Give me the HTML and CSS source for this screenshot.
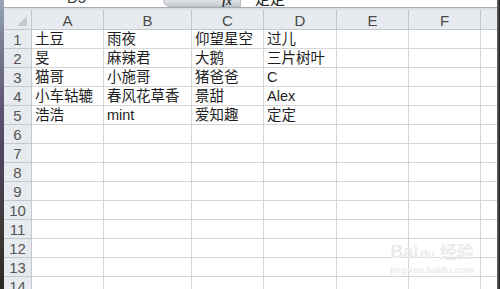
FILE: index.html
```html
<!DOCTYPE html>
<html lang="zh">
<head>
<meta charset="utf-8">
<title>Sheet</title>
<link rel="stylesheet" href="styles.css">
</head>
<body>
<div class="screen">
  <div class="edge-left"></div>
  <div class="window">
    <div class="formula-bar">
      <div class="name-box"><span class="name">D5</span></div>
      <div class="fx-area"><span class="fx">fx</span></div>
      <div class="formula">定定</div>
    </div>
    <div class="gap"></div>
    <div class="sheet">
      <div class="corner"><span class="tri"></span></div>
      <div class="ch">A</div><div class="ch">B</div><div class="ch">C</div><div class="ch">D</div><div class="ch">E</div><div class="ch">F</div><div class="ch last"></div>

      <div class="rh">1</div><div class="c">土豆</div><div class="c">雨夜</div><div class="c">仰望星空</div><div class="c">过儿</div><div class="c"></div><div class="c"></div><div class="c last"></div>
      <div class="rh">2</div><div class="c">旻</div><div class="c">麻辣君</div><div class="c">大鹅</div><div class="c">三片树叶</div><div class="c"></div><div class="c"></div><div class="c last"></div>
      <div class="rh">3</div><div class="c">猫哥</div><div class="c">小施哥</div><div class="c">猪爸爸</div><div class="c">C</div><div class="c"></div><div class="c"></div><div class="c last"></div>
      <div class="rh">4</div><div class="c">小车轱辘</div><div class="c">春风花草香</div><div class="c">景甜</div><div class="c">Alex</div><div class="c"></div><div class="c"></div><div class="c last"></div>
      <div class="rh">5</div><div class="c">浩浩</div><div class="c">mint</div><div class="c">爱知趣</div><div class="c">定定</div><div class="c"></div><div class="c"></div><div class="c last"></div>
      <div class="rh">6</div><div class="c"></div><div class="c"></div><div class="c"></div><div class="c"></div><div class="c"></div><div class="c"></div><div class="c last"></div>
      <div class="rh">7</div><div class="c"></div><div class="c"></div><div class="c"></div><div class="c"></div><div class="c"></div><div class="c"></div><div class="c last"></div>
      <div class="rh">8</div><div class="c"></div><div class="c"></div><div class="c"></div><div class="c"></div><div class="c"></div><div class="c"></div><div class="c last"></div>
      <div class="rh">9</div><div class="c"></div><div class="c"></div><div class="c"></div><div class="c"></div><div class="c"></div><div class="c"></div><div class="c last"></div>
      <div class="rh">10</div><div class="c"></div><div class="c"></div><div class="c"></div><div class="c"></div><div class="c"></div><div class="c"></div><div class="c last"></div>
      <div class="rh">11</div><div class="c"></div><div class="c"></div><div class="c"></div><div class="c"></div><div class="c"></div><div class="c"></div><div class="c last"></div>
      <div class="rh">12</div><div class="c"></div><div class="c"></div><div class="c"></div><div class="c"></div><div class="c"></div><div class="c"></div><div class="c last"></div>
      <div class="rh">13</div><div class="c"></div><div class="c"></div><div class="c"></div><div class="c"></div><div class="c"></div><div class="c"></div><div class="c last"></div>
      <div class="rh">14</div><div class="c"></div><div class="c"></div><div class="c"></div><div class="c"></div><div class="c"></div><div class="c"></div><div class="c last"></div>
    </div>
    <div class="watermark">
      <div class="wm-top"><span class="wm-bai">Bai</span><span class="wm-du">du</span><span class="wm-jy">经验</span></div>
      <div class="wm-url">jingyan.baidu.com</div>
    </div>
  </div>
  <div class="edge-right"></div>
</div>
</body>
</html>
```

FILE: styles.css
```css
* { box-sizing: border-box; }
html, body { margin: 0; padding: 0; }
body {
  width: 500px;
  height: 289px;
  overflow: hidden;
  background: #fff;
  font-family: "Liberation Sans", "Noto Sans CJK SC", sans-serif;
}
.screen {
  display: flex;
  width: 500px;
  height: 289px;
}
.edge-left {
  width: 4px;
  flex: none;
  background: linear-gradient(180deg, #9aa6b8 0%, #7a7f95 15%, #5c4f6e 40%, #4a4258 60%, #3d3b32 80%, #2b2a22 100%);
}
.edge-right {
  width: 3px;
  flex: none;
  background: linear-gradient(90deg, #6a6a6a, #1e1e1e);
}
.window {
  flex: 1;
  position: relative;
  overflow: hidden;
  display: flex;
  flex-direction: column;
}
.formula-bar {
  height: 8px;
  flex: none;
  display: flex;
  background: #fff;
  border-bottom: 1px solid #a7abb2;
  overflow: hidden;
  font-family: "Noto Sans CJK SC", sans-serif;
  font-size: 14px;
  color: #222;
}
.name-box {
  width: 159px;
  flex: none;
  position: relative;
  overflow: hidden;
}
.name {
  display: block;
  margin-left: 63px;
  margin-top: -11px;
  line-height: 18px;
  font-family: "Liberation Sans", sans-serif;
  font-size: 15px;
  color: #333;
}
.fx-area {
  width: 78px;
  flex: none;
  border-radius: 0 0 0 14px;
  border-left: 1px solid #b9bec6;
  border-bottom: 1px solid #b9bec6;
  border-right: 1px solid #b9bec6;
  background: linear-gradient(180deg, #dfe2e7, #c9cdd4);
  display: flex;
  justify-content: flex-end;
  padding-right: 8px;
}
.fx {
  font-family: "Liberation Serif", serif;
  font-style: italic;
  font-weight: bold;
  font-size: 12px;
  line-height: 12px;
  margin-top: -5px;
  color: #333;
}
.formula {
  padding-left: 14px;
  line-height: 18px;
  margin-top: -11px;
  font-size: 15px;
}
.gap {
  height: 2px;
  flex: none;
  background: #dde1e7;
}
.sheet {
  display: grid;
  grid-template-columns: 28px 72px 88px 72px 73px 72px 72px 1fr;
  grid-template-rows: 20px repeat(14, 19px);
}
.corner, .ch, .rh {
  background: #e7eaee;
  border-right: 1px solid #c3c8cf;
  border-bottom: 1px solid #c3c8cf;
  color: #4a4a4a;
  font-size: 15px;
  display: flex;
  align-items: center;
  justify-content: center;
}
.corner { position: relative; }
.tri {
  position: absolute;
  right: 4px;
  bottom: 3px;
  width: 0;
  height: 0;
  border-left: 10px solid transparent;
  border-bottom: 10px solid #c5c9cf;
}
.ch { padding-top: 1px; }
.rh { padding-top: 1px; color: #555; }
.c {
  border-right: 1px solid #d6d6d6;
  border-bottom: 1px solid #d6d6d6;
  display: flex;
  align-items: flex-end;
  padding: 0 0 1px 3px;
  font-family: "Liberation Sans", "Noto Sans CJK SC", sans-serif;
  font-size: 14.5px;
  line-height: 16px;
  color: #1e1e1e;
  white-space: nowrap;
  overflow: visible;
}
.last { border-right: none; }
.watermark {
  position: absolute;
  left: 382px;
  top: 240px;
  width: 92px;
  color: #ebebeb;
  text-align: center;
  pointer-events: none;
}
.wm-top {
  font-size: 18px;
  font-weight: bold;
  font-family: "Liberation Sans", sans-serif;
  line-height: 22px;
}
.wm-du { font-size: 12px; margin: 0 2px; }
.wm-jy { font-family: "Noto Sans CJK SC", sans-serif; font-size: 17px; margin-left: 3px; }
.wm-url {
  font-size: 9px;
  font-weight: bold;
  line-height: 11px;
  letter-spacing: 0.3px;
}
```
